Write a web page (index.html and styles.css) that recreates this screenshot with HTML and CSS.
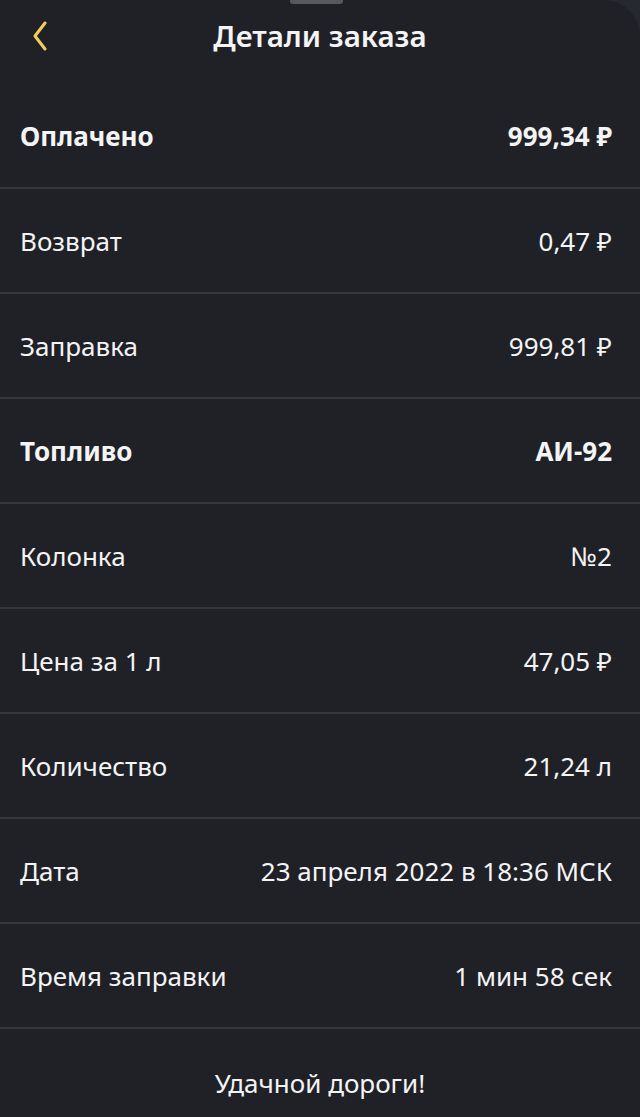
FILE: index.html
```html
<!DOCTYPE html>
<html lang="ru">
<head>
  <meta charset="UTF-8" />
  <meta name="viewport" content="width=device-width, initial-scale=1.0" />
  <title>Детали заказа</title>
  <link rel="stylesheet" href="styles.css">
</head>
<body>
  <div class="sheet">
    <div class="grabber"></div>

    <div class="header">
      <svg class="back" width="16" height="30" viewBox="0 0 16 30">
        <path d="M13 2 L3 15 L13 28" fill="none" stroke="#f3cd5b" stroke-width="3" stroke-linecap="round" stroke-linejoin="round"/>
      </svg>
      <h1>Детали заказа</h1>
    </div>

    <div class="row bold"><span>Оплачено</span><span>999,34 ₽</span></div>
    <div class="row"><span>Возврат</span><span>0,47 ₽</span></div>
    <div class="row"><span>Заправка</span><span>999,81 ₽</span></div>
    <div class="row bold"><span>Топливо</span><span>АИ-92</span></div>
    <div class="row"><span>Колонка</span><span>№2</span></div>
    <div class="row"><span>Цена за 1 л</span><span>47,05 ₽</span></div>
    <div class="row"><span>Количество</span><span>21,24 л</span></div>
    <div class="row"><span>Дата</span><span>23 апреля 2022 в 18:36 МСК</span></div>
    <div class="row"><span>Время заправки</span><span>1 мин 58 сек</span></div>

    <div class="footer">Удачной дороги!</div>
  </div>
</body>
</html>
```

FILE: styles.css
```css
body {
  margin: 0;
  padding: 0;
  background: #272931;
  font-family: 'Noto Sans', sans-serif;
  color: #f4f4f5;
  overflow: hidden;
}

.sheet {
  position: relative;
  background: #202127;
  min-height: 1117px;
  border-radius: 0 36px 0 0;
}

.grabber {
  position: absolute;
  top: 0;
  left: 290px;
  width: 53px;
  height: 4px;
  background: #57585e;
  border-radius: 0 0 3px 3px;
}

.header {
  height: 84px;
  position: relative;
  display: flex;
  align-items: flex-start;
  justify-content: center;
}

.header h1 {
  margin: 16px 0 0;
  font-size: 29.5px;
  font-weight: 600;
  line-height: 40px;
}

.back {
  position: absolute;
  left: 32px;
  top: 21px;
}

.row {
  height: 103px;
  border-bottom: 2px solid #36373d;
  display: flex;
  justify-content: space-between;
  align-items: center;
  padding: 0 28px 0 20px;
  font-size: 26px;
}

.row.bold {
  font-weight: 700;
}

.footer {
  text-align: center;
  font-size: 26px;
  padding-top: 36px;
}
```
